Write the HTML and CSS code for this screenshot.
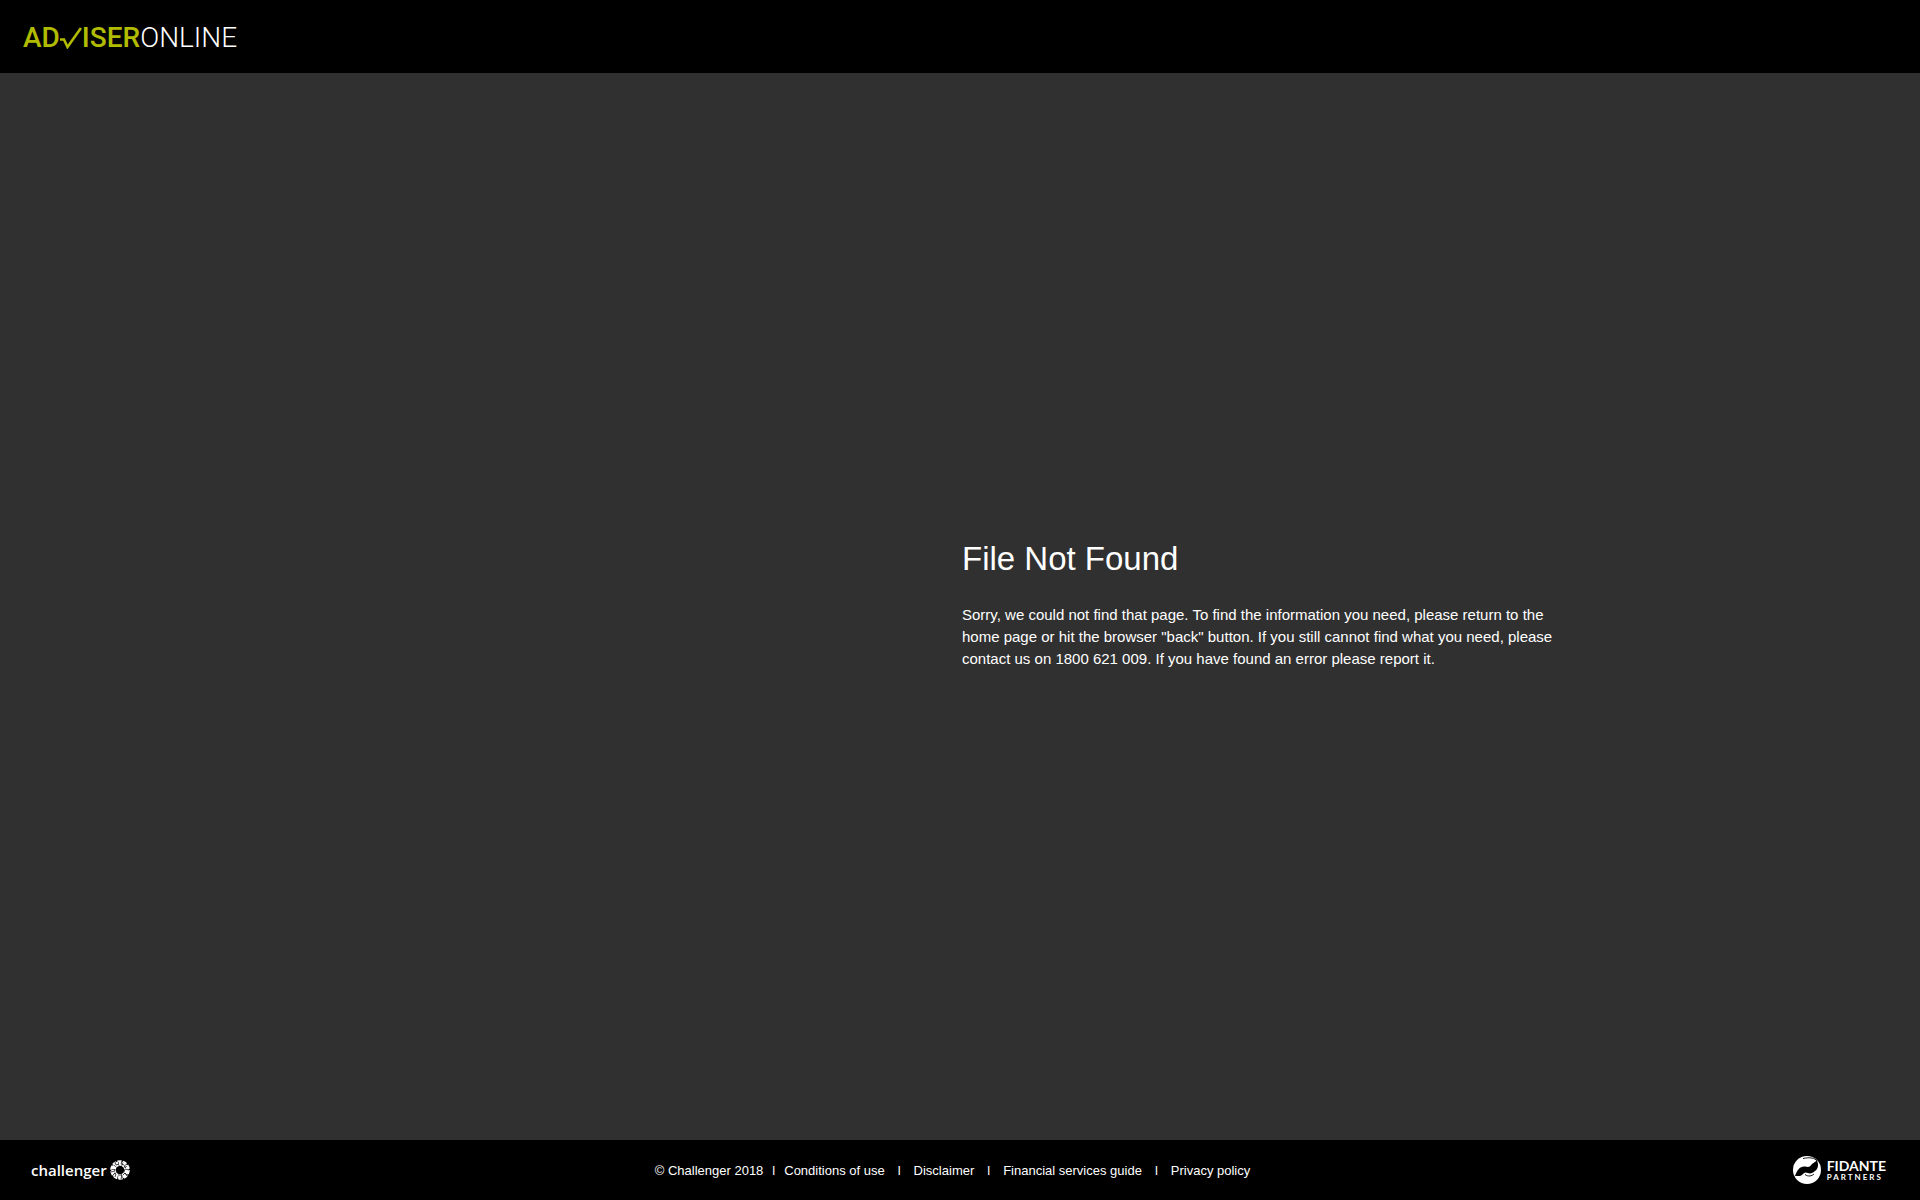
FILE: index.html
```html
<!DOCTYPE html>
<html lang="en">
<head>
<meta charset="utf-8">
<title>File Not Found - Adviser Online</title>
<link rel="stylesheet" href="styles.css">
</head>
<body>
<header class="header">
  <a class="logo" href="#">
    <span class="logo-strong">AD</span>
    <svg class="logo-tick" viewBox="0 0 22 22" aria-hidden="true"><path d="M0 12.500H4L7.500 20L21 1" fill="none" stroke="currentColor" stroke-width="2.600"/></svg>
    <span class="logo-strong">ISER</span>
    <span class="logo-light">ONLINE</span>
  </a>
</header>
<main class="main">
  <section class="message">
    <h1>File Not Found</h1>
    <p>Sorry, we could not find that page. To find the information you need, please return to the home page or hit the browser "back" button. If you still cannot find what you need, please contact us on 1800 621 009. If you have found an error please report it.</p>
  </section>
</main>
<footer class="footer">
  <a class="challenger" href="#">
    <span>challenger</span>
    <svg class="challenger-mark" viewBox="0 0 20 20" aria-hidden="true">
      <circle cx="10" cy="10" r="6.500" fill="none" stroke="#fff" stroke-width="4.600" stroke-dasharray="3.600 .484"/>
      <circle cx="10" cy="10" r="9" fill="none" stroke="#fff" stroke-width="1.600" stroke-dasharray="4.200 1.450"/>
      <path d="M5 2l1 3l3-1M12 1l-1 3l3 1M17 4l-3 2l2 2M19 10l-4-1l-1 3M17 16l-2-3l-2 2M11 19l1-4l-3 0M5 17l1-3l-2-1M1 12l4-1l-1-2" fill="none" stroke="#000" stroke-width=".7"/>
    </svg>
  </a>
  <nav class="links">
    <span>© Challenger 2018</span><span class="bar first">l</span>
    <a href="#">Conditions of use</a><span class="bar">l</span>
    <a href="#">Disclaimer</a><span class="bar">l</span>
    <a href="#">Financial services guide</a><span class="bar">l</span>
    <a href="#">Privacy policy</a>
  </nav>
  <a class="fidante" href="#">
    <svg class="fidante-mark" viewBox="0 0 28 28" aria-hidden="true">
      <circle cx="14" cy="14" r="14" fill="#fff"/>
      <path d="M2 20C4 14 7 10 12 10.500C15 11 16 12 19 8L24 4.500C26 9 25 13 22 15C20 17 17 18 15 17C12 15.500 11 17 9 19C7 20.500 4 20 2 20Z" fill="#000"/>
      <path d="M10 2.500C17 1 22 2 24 5M12 18.500C15 21 19 20 21 18" fill="none" stroke="#000" stroke-width=".9"/>
    </svg>
    <span class="fidante-name"><strong>FIDANTE</strong><span class="partners">PARTNERS</span></span>
  </a>
</footer>
</body>
</html>
```
FILE: styles.css
```css
* { box-sizing: border-box; }
body {
  margin: 0;
  min-height: 100vh;
  display: flex;
  flex-direction: column;
  background: #303030;
  color: #fff;
  font-family: "Liberation Sans", Arial, sans-serif;
}
a { color: inherit; text-decoration: none; }
.header {
  height: 73px;
  padding: 2px 23px 0;
  display: flex;
  align-items: center;
  background: #000;
}
.logo {
  display: flex;
  align-items: center;
  font: 28px/32px Roboto, sans-serif;
}
.logo-strong, .logo-tick { color: #b1bb00; }
.logo-strong { font-weight: 500; }
.logo-light { font-weight: 300; }
.logo-tick { width: 22px; height: 22px; }
.main { flex: 1; padding-left: 50%; }
.message { width: 624px; padding: 466px 0 0 2px; }
h1 { margin: 0; font-size: 33px; line-height: 40px; font-weight: 400; }
p { margin: 25px 0 0; font-size: 15px; line-height: 22px; }
.footer {
  height: 60px;
  padding: 0 34px 0 31px;
  display: grid;
  grid-template-columns: 1fr auto 1fr;
  align-items: center;
  background: #000;
}
.challenger {
  display: flex;
  align-items: center;
  gap: 3px;
  font: 600 15px/20px "Open Sans", sans-serif;
}
.challenger-mark { width: 20px; height: 20px; }
.links { display: flex; padding: 2px 12px 0 0; font-size: 13px; line-height: 16px; }
.bar { margin: 0 13px; }
.bar.first { margin: 0 9px; }
.fidante { justify-self: end; display: flex; align-items: center; gap: 6px; }
.fidante-mark { width: 28px; height: 28px; }
.fidante-name { display: flex; flex-direction: column; font-family: Lato, sans-serif; }
.fidante-name strong { font-size: 14px; line-height: 14px; font-weight: 700; }
.partners { font-size: 8px; line-height: 9px; font-weight: 700; letter-spacing: 2px; }
```
